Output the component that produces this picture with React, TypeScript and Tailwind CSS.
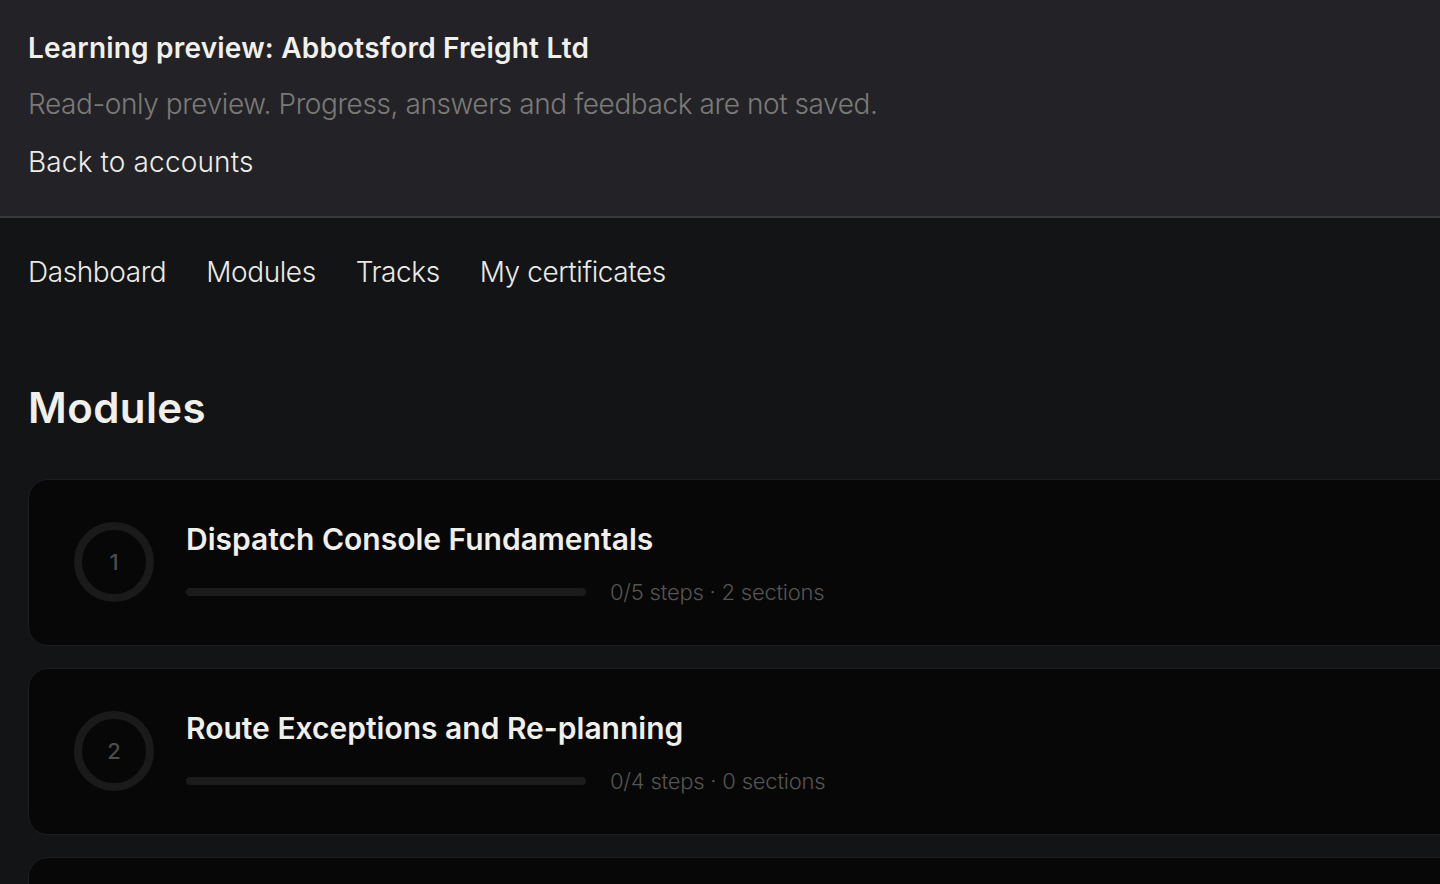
import React from 'react';

const modules = [
  { id: 1, title: 'Dispatch Console Fundamentals', steps: '0/5 steps', sections: '2 sections' },
  { id: 2, title: 'Route Exceptions and Re-planning', steps: '0/4 steps', sections: '0 sections' },
  { id: 3, title: 'Driver Communication Protocols', steps: '0/3 steps', sections: '1 section' },
];

const navItems = ['Dashboard', 'Modules', 'Tracks', 'My certificates'];

const App: React.FC = () => {
  return (
    <div className="min-h-screen w-full overflow-hidden bg-[#131416] font-['Inter',sans-serif] text-[#efeee9]">
      {/* Preview banner */}
      <div className="bg-[#232327] border-b-2 border-[#38393d] px-[28px] pt-[30px] pb-[34px]">
        <h1 className="text-[28px] leading-[36px] font-semibold tracking-[0.007em] text-[#f1f0ea]">
          Learning preview: Abbotsford Freight Ltd
        </h1>
        <p className="mt-[18px] text-[28px] leading-[40px] font-light tracking-[-0.015em] text-[#7b7a76]">
          Read-only preview. Progress, answers and feedback are not saved.
        </p>
        <a className="mt-[18px] block text-[28px] leading-[40px] font-light tracking-[0.005em] text-[#eeede8]">
          Back to accounts
        </a>
      </div>

      {/* Nav */}
      <nav className="flex gap-[40px] px-[28px] pt-[34px]">
        {navItems.map((item) => (
          <a key={item} className="text-[28px] leading-[40px] font-light tracking-[-0.015em] text-[#ebeae5]">
            {item}
          </a>
        ))}
      </nav>

      {/* Content */}
      <main className="px-[28px] pt-[92px]">
        <h2 className="text-[42px] leading-[48px] font-semibold tracking-[0.01em] text-[#f0efe9]">Modules</h2>

        <div className="mt-[47px] flex w-[1600px] flex-col gap-[22px]">
          {modules.map((m) => (
            <div
              key={m.id}
              className="flex items-center gap-[32px] rounded-[20px] border border-[#1d1e21] bg-[#070707] px-[45px] pt-[42px] pb-[43px]"
            >
              <div className="flex h-[80px] w-[80px] shrink-0 items-center justify-center rounded-full border-[8px] border-[#1a1a1a] text-[22px] font-medium text-[#4c4c4c]">
                {m.id}
              </div>
              <div className="flex flex-col">
                <h3 className="text-[30px] leading-[34px] font-semibold text-[#f0efe9]">
                  {m.title}
                </h3>
                <div className="mt-[26px] flex h-[20px] items-center gap-[24px]">
                  <div className="h-[8px] w-[400px] rounded-full bg-[#1b1b1b]" />
                  <span className="text-[22px] leading-[20px] font-light tracking-[-0.01em] text-[#555553]">
                    {m.steps} · {m.sections}
                  </span>
                </div>
              </div>
            </div>
          ))}
        </div>
      </main>
    </div>
  );
};

export default App;
